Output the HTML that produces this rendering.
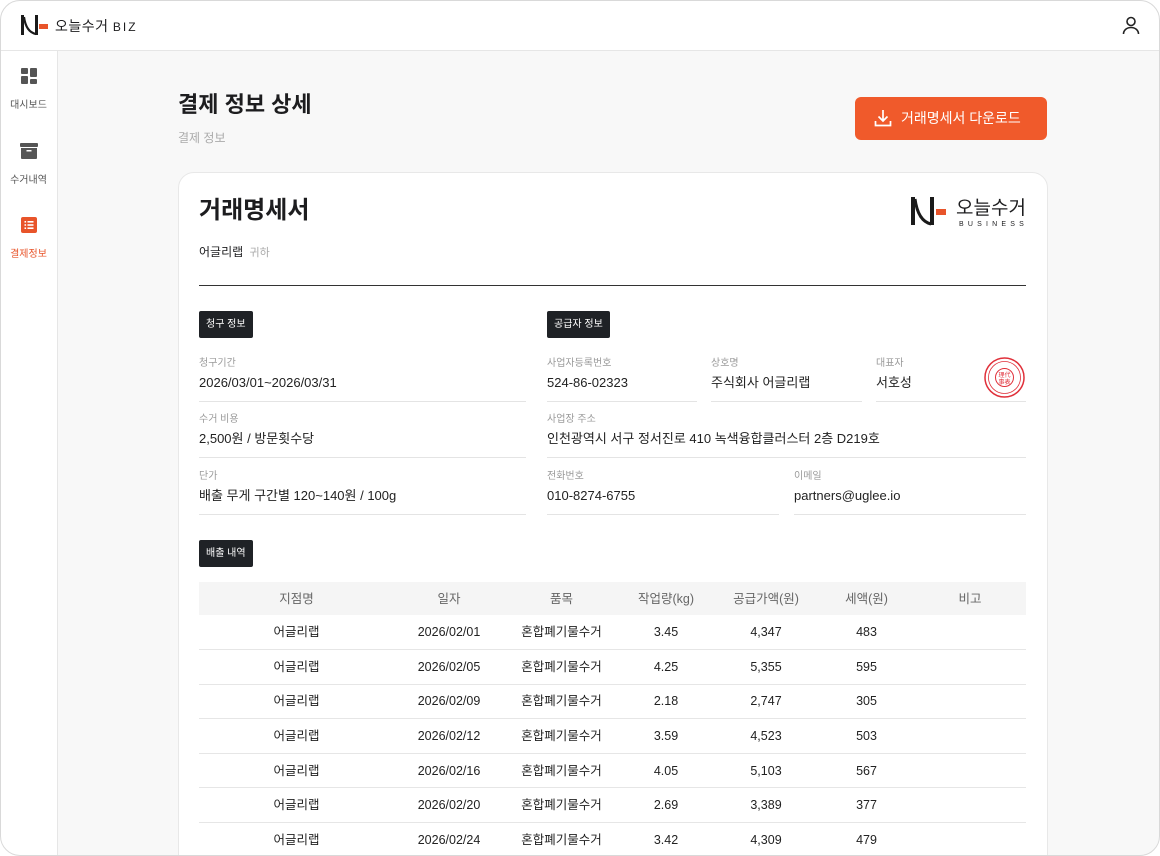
<!DOCTYPE html>
<html><head><meta charset="utf-8">
<style>
*{margin:0;padding:0;box-sizing:border-box}
body{width:1160px;height:856px;background:#fff;font-family:"Liberation Sans","Noto Sans CJK KR",sans-serif;color:#1d1d1f;overflow:hidden;position:relative;line-height:1.25}
.frame{position:absolute;left:0;top:0;width:1160px;height:856px;border-radius:20px;overflow:hidden;background:#f8f8f8}
.bord{position:absolute;left:0;top:0;width:1160px;height:856px;border:1px solid #d9d9d9;border-radius:20px;pointer-events:none}
.hdr{position:absolute;left:0;top:0;width:100%;height:51px;background:#fff;border-bottom:1px solid #e6e6e6}
.side{position:absolute;left:0;top:51px;width:58px;bottom:0;background:#fff;border-right:1px solid #e6e6e6}
.nav{position:absolute;left:0;width:57px;text-align:center;font-size:10px;color:#555}
.nav div{margin-top:10px !important}
.abs{position:absolute}
.card{position:absolute;left:178px;top:172px;width:870px;height:700px;background:#fff;border:1px solid #e8e8e8;border-radius:16px}
.tag{position:absolute;height:27px;background:#1f2226;color:#fff;font-size:10px;line-height:27px;padding:0 7px;border-radius:2px}
.lbl{position:absolute;font-size:10px;color:#9a9a9a}
.val{position:absolute;font-size:13px;color:#222}
.ln{position:absolute;height:1px;background:#e4e4e4}
table{position:absolute;left:199px;top:582px;width:827px;border-collapse:collapse;font-size:12.5px}
th{height:33px;background:#f5f5f5;font-weight:normal;color:#666;font-size:12.5px;line-height:16px}
td{height:34.6px;text-align:center;border-bottom:1px solid #e6e6e6;color:#222;line-height:16px;vertical-align:middle}
</style></head><body>
<div class="frame">
<div class="hdr">
 <svg class="abs" style="left:21px;top:14px" width="28" height="22" viewBox="0 0 28 22"><rect x="0" y="1" width="3" height="20" fill="#1a1a1a"/><path d="M3 3 Q5 18 15 20" stroke="#1a1a1a" stroke-width="2.2" fill="none"/><rect x="14" y="1" width="3" height="20" fill="#1a1a1a"/><rect x="18" y="10" width="9" height="5" fill="#e8542a"/></svg>
 <div class="abs" style="left:55px;top:18px;font-size:14px;letter-spacing:0.5px">오늘수거 <span style="font-size:12px;letter-spacing:2px">BIZ</span></div>
 <svg class="abs" style="left:1121px;top:15px" width="20" height="20" viewBox="0 0 20 20" fill="none" stroke="#222" stroke-width="1.6"><circle cx="10" cy="6.5" r="4"/><path d="M2.5 19c0-4 3.5-6.5 7.5-6.5s7.5 2.5 7.5 6.5"/></svg>
</div>
<div class="side">
 <div class="nav" style="top:16px"><svg width="18" height="18" viewBox="0 0 18 18" fill="#555"><rect x="1" y="1" width="7" height="6" rx="1"/><rect x="10" y="1" width="7" height="9" rx="1"/><rect x="1" y="9" width="7" height="8" rx="1"/><rect x="10" y="12" width="7" height="5" rx="1"/></svg><div>대시보드</div></div>
 <div class="nav" style="top:91px"><svg width="20" height="18" viewBox="0 0 20 18" fill="#555"><rect x="1" y="1" width="18" height="4" rx="1"/><path d="M2 6h16v10a1 1 0 0 1-1 1H3a1 1 0 0 1-1-1z"/><rect x="7.5" y="8" width="5" height="1.5" fill="#fff"/></svg><div>수거내역</div></div>
 <div class="nav" style="top:165px;color:#e8542a"><svg width="18" height="18" viewBox="0 0 18 18"><rect x="1" y="1" width="16" height="16" rx="2" fill="#e8542a"/><g fill="#fff"><rect x="4.5" y="5" width="1.6" height="1.6"/><rect x="7.5" y="5" width="6" height="1.6"/><rect x="4.5" y="8.2" width="1.6" height="1.6"/><rect x="7.5" y="8.2" width="6" height="1.6"/><rect x="4.5" y="11.4" width="1.6" height="1.6"/><rect x="7.5" y="11.4" width="6" height="1.6"/></g></svg><div>결제정보</div></div>
</div>
<div class="abs" style="left:178px;top:91px;font-size:22px;font-weight:bold">결제 정보 상세</div>
<div class="abs" style="left:178px;top:131px;font-size:12px;color:#aaa">결제 정보</div>
<div class="abs" style="left:855px;top:97px;width:192px;height:43px;background:#f05a2b;border-radius:6px;color:#fff;font-size:14px;line-height:43px;padding-left:46px">거래명세서 다운로드
 <svg class="abs" style="left:19px;top:12px" width="18" height="18" viewBox="0 0 18 18" fill="none" stroke="#fff" stroke-width="1.7"><path d="M9 1v11M4.5 7.5 9 12l4.5-4.5M1.5 12v4.5h15V12"/></svg></div>
<div class="card"></div>
<div class="abs" style="left:199px;top:196px;font-size:24px;font-weight:bold">거래명세서</div>
<svg class="abs" style="left:911px;top:196px" width="36" height="30" viewBox="0 0 36 30"><rect x="0" y="1" width="4" height="28" fill="#1a1a1a"/><path d="M4 3 Q7 25 20 28" stroke="#1a1a1a" stroke-width="3" fill="none"/><rect x="19" y="1" width="4" height="28" fill="#1a1a1a"/><rect x="25" y="13" width="10" height="6" fill="#e8542a"/></svg>
<div class="abs" style="left:956px;top:197px;font-size:19px">오늘수거</div>
<div class="abs" style="left:959px;top:221px;font-size:7px;letter-spacing:4.2px">BUSINESS</div>
<div class="abs" style="left:199px;top:245px;font-size:12px">어글리랩 <span style="color:#aaa;font-size:11px">&nbsp;귀하</span></div>
<div class="abs" style="left:199px;top:285px;width:827px;height:1px;background:#333"></div>
<div class="tag" style="left:199px;top:311px">청구 정보</div>
<div class="tag" style="left:547px;top:311px">공급자 정보</div>
<div class="lbl" style="left:199px;top:358px">청구기간</div><div class="val" style="left:199px;top:375px">2026/03/01~2026/03/31</div><div class="ln" style="left:199px;top:401px;width:327px"></div>
<div class="lbl" style="left:199px;top:414px">수거 비용</div><div class="val" style="left:199px;top:431px">2,500원 / 방문횟수당</div><div class="ln" style="left:199px;top:457px;width:327px"></div>
<div class="lbl" style="left:199px;top:471px">단가</div><div class="val" style="left:199px;top:488px">배출 무게 구간별 120~140원 / 100g</div><div class="ln" style="left:199px;top:514px;width:327px"></div>
<div class="lbl" style="left:547px;top:358px">사업자등록번호</div><div class="val" style="left:547px;top:375px">524-86-02323</div><div class="ln" style="left:547px;top:401px;width:150px"></div>
<div class="lbl" style="left:711px;top:358px">상호명</div><div class="val" style="left:711px;top:375px">주식회사 어글리랩</div><div class="ln" style="left:711px;top:401px;width:151px"></div>
<div class="lbl" style="left:876px;top:358px">대표자</div><div class="val" style="left:876px;top:375px">서호성</div><div class="ln" style="left:876px;top:401px;width:150px"></div>
<svg class="abs" style="left:984px;top:357px" width="41" height="41" viewBox="0 0 41 41" fill="none" stroke="#e0303a"><circle cx="20.5" cy="20.5" r="19.5" stroke-width="1.5"/><circle cx="20.5" cy="20.5" r="16" stroke-width="0.8"/><circle cx="20.5" cy="20.5" r="9" stroke-width="1"/><text x="20.5" y="20" font-size="6" fill="#e0303a" stroke="none" text-anchor="middle">理代</text><text x="20.5" y="27" font-size="6" fill="#e0303a" stroke="none" text-anchor="middle">事表</text></svg>
<div class="lbl" style="left:547px;top:414px">사업장 주소</div><div class="val" style="left:547px;top:431px">인천광역시 서구 정서진로 410 녹색융합클러스터 2층 D219호</div><div class="ln" style="left:547px;top:457px;width:479px"></div>
<div class="lbl" style="left:547px;top:471px">전화번호</div><div class="val" style="left:547px;top:488px">010-8274-6755</div><div class="ln" style="left:547px;top:514px;width:232px"></div>
<div class="lbl" style="left:794px;top:471px">이메일</div><div class="val" style="left:794px;top:488px">partners@uglee.io</div><div class="ln" style="left:794px;top:514px;width:232px"></div>
<div class="tag" style="left:199px;top:540px">배출 내역</div>
<table>
<colgroup><col style="width:195px"><col style="width:110px"><col style="width:115px"><col style="width:94px"><col style="width:106px"><col style="width:95px"><col style="width:112px"></colgroup>
<tr><th>지점명</th><th>일자</th><th>품목</th><th>작업량(kg)</th><th>공급가액(원)</th><th>세액(원)</th><th>비고</th></tr>
<tr><td>어글리랩</td><td>2026/02/01</td><td>혼합폐기물수거</td><td>3.45</td><td>4,347</td><td>483</td><td></td></tr>
<tr><td>어글리랩</td><td>2026/02/05</td><td>혼합폐기물수거</td><td>4.25</td><td>5,355</td><td>595</td><td></td></tr>
<tr><td>어글리랩</td><td>2026/02/09</td><td>혼합폐기물수거</td><td>2.18</td><td>2,747</td><td>305</td><td></td></tr>
<tr><td>어글리랩</td><td>2026/02/12</td><td>혼합폐기물수거</td><td>3.59</td><td>4,523</td><td>503</td><td></td></tr>
<tr><td>어글리랩</td><td>2026/02/16</td><td>혼합폐기물수거</td><td>4.05</td><td>5,103</td><td>567</td><td></td></tr>
<tr><td>어글리랩</td><td>2026/02/20</td><td>혼합폐기물수거</td><td>2.69</td><td>3,389</td><td>377</td><td></td></tr>
<tr><td>어글리랩</td><td>2026/02/24</td><td>혼합폐기물수거</td><td>3.42</td><td>4,309</td><td>479</td><td></td></tr>
</table>
</div>
<div class="bord"></div>
</body></html>
